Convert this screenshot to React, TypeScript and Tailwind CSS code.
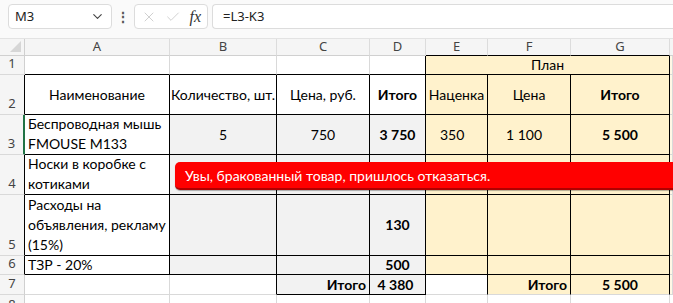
import { ChevronDown, Check, X } from "lucide-react";

const cols = ["A", "B", "C", "D", "E", "F", "G"];

type CellProps = {
  children?: React.ReactNode;
  className?: string;
};

const dark = "border-r border-b border-black";
const light = "border-r border-b border-[#d9d9d9]";

function Cell({ children, className = "" }: CellProps) {
  return (
    <div className={`flex min-w-0 overflow-hidden whitespace-nowrap leading-[20px] ${className}`}>{children}</div>
  );
}

function RowHead({ n, className = "" }: { n: number; className?: string }) {
  return (
    <div
      className={`flex items-end justify-center pb-[1px] text-[13px] text-[#444] font-['Noto_Sans',sans-serif] bg-[#f5f5f5] border-b border-[#d9d9d9] ${className}`}
    >
      {n}
    </div>
  );
}

export default function App() {
  const gray = "bg-[#f2f2f2]";
  const gold = "bg-[#fff2cc]";
  return (
    <div className="w-[673px] h-[303px] overflow-hidden bg-white relative font-['Lato',sans-serif] text-[14px] text-black">
      {/* formula bar */}
      <div className="h-[39px] flex items-start gap-[4px] pt-[4px] pl-[8px] bg-[#fafafa] border-b border-[#e3e3e3]">
        <div className="w-[104px] h-[25px] flex items-center justify-between px-[6px] bg-white border border-[#dcdcdc] rounded-[4px] font-['Noto_Sans',sans-serif] text-[13px] text-[#222]">
          <span>M3</span>
          <ChevronDown className="w-[15px] h-[15px] text-[#444]" strokeWidth={1.8} />
        </div>
        <div className="w-[14px] h-[25px] flex items-center justify-center text-[#555] text-[14px] font-bold">⋮</div>
        <div className="w-[74px] h-[25px] flex items-center justify-between px-[6px] bg-white border border-[#dcdcdc] rounded-[4px]">
          <X className="w-[16px] h-[16px] text-[#c4c4c4]" strokeWidth={1.2} />
          <Check className="w-[16px] h-[16px] text-[#c4c4c4]" strokeWidth={1.2} />
          <span className="font-['Liberation_Serif',serif] italic text-[16px] text-[#333] leading-none">fx</span>
        </div>
        <div className="flex-1 h-[25px] flex items-center px-[10px] bg-white border border-[#dcdcdc] rounded-l-[4px] border-r-0 font-['Noto_Sans',sans-serif] text-[13px] text-[#222]">
          =L3-K3
        </div>
      </div>

      {/* sheet */}
      <div className="grid grid-cols-[25px_145px_107px_93px_56px_62px_83px_99px_1fr] grid-rows-[17px_19px_40px_40px_40px_61px_19px_20px_1fr] h-[264px]">
        {/* column headers */}
        <div className="relative bg-[#f5f5f5] border-r border-b border-[#d0d0d0]">
          <div className="absolute right-[3px] bottom-[3px] w-0 h-0 border-l-[11px] border-l-transparent border-b-[11px] border-b-[#d6d6d6]" />
        </div>
        {cols.map((c, i) => (
          <div
            key={c}
            className={`flex items-center justify-center text-[13px] text-[#444] font-['Noto_Sans',sans-serif] bg-[#f5f5f5] border-r border-[#dcdcdc] border-b ${
              i >= 4 ? "border-b-black" : "border-b-[#d0d0d0]"
            }`}
          >
            {c}
          </div>
        ))}
        <div className="bg-[#f5f5f5] border-b border-[#d0d0d0]" />

        {/* row 1 */}
        <RowHead n={1} className="border-r border-r-[#d0d0d0]" />
        <Cell className="border-r border-[#d9d9d9] border-b border-b-black" />
        <Cell className="border-r border-[#d9d9d9] border-b border-b-black" />
        <Cell className="border-r border-[#d9d9d9] border-b border-b-black" />
        <Cell className={dark} />
        <Cell className={`col-span-3 ${dark} ${gold} items-center justify-center`}>План</Cell>
        <Cell className={`${light} bg-[#fff8e6]`} />

        {/* row 2 */}
        <RowHead n={2} className="border-r border-r-black" />
        <Cell className={`${dark} items-center justify-center`}>Наименование</Cell>
        <Cell className={`${dark} items-center justify-center`}>Количество, шт.</Cell>
        <Cell className={`${dark} items-center justify-center`}>Цена, руб.</Cell>
        <Cell className={`${dark} items-center justify-center font-bold`}>Итого</Cell>
        <Cell className={`${dark} ${gold} items-center justify-center`}>Наценка</Cell>
        <Cell className={`${dark} ${gold} items-center justify-center`}>Цена</Cell>
        <Cell className={`${dark} ${gold} items-center justify-center font-bold`}>Итого</Cell>
        <Cell className={`${light} bg-[#fff8e6]`} />

        {/* row 3 */}
        <RowHead n={3} className="bg-[#dedede] text-[#1e6e3e] border-r-2 border-r-[#217346]" />
        <Cell className={`${dark} items-end px-[3px]`}>
          <span>
            Беспроводная мышь
            <br />
            FMOUSE M133
          </span>
        </Cell>
        <Cell className={`${dark} ${gray} items-center justify-center`}>5</Cell>
        <Cell className={`${dark} ${gray} items-center justify-center`}>750</Cell>
        <Cell className={`${dark} ${gray} items-center justify-center font-bold`}>3 750</Cell>
        <Cell className={`${dark} ${gold} items-center pl-[14px]`}>350</Cell>
        <Cell className={`${dark} ${gold} items-center justify-center pr-[10px]`}>1 100</Cell>
        <Cell className={`${dark} ${gold} items-center justify-center font-bold`}>5 500</Cell>
        <Cell className={`${light} bg-[#fff8e6]`} />

        {/* row 4 */}
        <RowHead n={4} className="border-r border-r-black" />
        <Cell className={`${dark} items-end px-[3px]`}>
          <span>
            Носки в коробке с
            <br />
            котиками
          </span>
        </Cell>
        <Cell className={`${dark} ${gray}`} />
        <Cell className={`${dark} ${gray}`} />
        <Cell className={`${dark} ${gray}`} />
        <Cell className={`${dark} ${gold}`} />
        <Cell className={`${dark} ${gold}`} />
        <Cell className={`${dark} ${gold}`} />
        <Cell className={`${light} bg-[#fff8e6]`} />

        {/* row 5 */}
        <RowHead n={5} className="border-r border-r-black" />
        <Cell className={`${dark} items-end px-[3px]`}>
          <span>
            Расходы на
            <br />
            объявления, рекламу
            <br />
            (15%)
          </span>
        </Cell>
        <Cell className={`${dark} ${gray}`} />
        <Cell className={`${dark} ${gray}`} />
        <Cell className={`${dark} ${gray} items-center justify-center font-bold`}>130</Cell>
        <Cell className={`${dark} ${gold}`} />
        <Cell className={`${dark} ${gold}`} />
        <Cell className={`${dark} ${gold}`} />
        <Cell className={`${light} bg-[#fff8e6]`} />

        {/* row 6 */}
        <RowHead n={6} className="border-r border-r-black" />
        <Cell className={`${dark} items-center px-[3px]`}>ТЗР - 20%</Cell>
        <Cell className={`${dark} ${gray}`} />
        <Cell className={`${dark} ${gray}`} />
        <Cell className={`${dark} ${gray} items-center justify-center font-bold`}>500</Cell>
        <Cell className={`${dark} ${gold}`} />
        <Cell className={`${dark} ${gold}`} />
        <Cell className={`${dark} ${gold}`} />
        <Cell className={`${light} bg-[#fff8e6]`} />

        {/* row 7 */}
        <RowHead n={7} className="border-r border-r-[#d0d0d0]" />
        <Cell className={light} />
        <Cell className="border-r border-r-black border-b border-b-[#d9d9d9]" />
        <Cell className={`${dark} ${gray} items-center justify-end pr-[3px] font-bold`}>Итого</Cell>
        <Cell className={`${dark} ${gray} items-center justify-center font-bold pr-[4px]`}>4 380</Cell>
        <Cell className="border-r border-r-black border-b border-b-[#d9d9d9]" />
        <Cell className={`border-r border-r-black border-b border-b-[#d9d9d9] ${gold} items-center justify-end pr-[3px] font-bold`}>
          Итого
        </Cell>
        <Cell className={`border-r border-r-black border-b border-b-[#d9d9d9] ${gold} items-center justify-center font-bold`}>
          5 500
        </Cell>
        <Cell className={`${light} bg-[#fff8e6]`} />

        {/* row 8 */}
        <RowHead n={8} className="border-r border-r-[#d0d0d0]" />
        {cols.map((c) => (
          <Cell key={c} className={light} />
        ))}
        <Cell />
      </div>

      {/* error banner */}
      <div className="absolute left-[175px] top-[162px] right-[-8px] h-[28px] flex items-center pl-[10px] bg-[#ff0000] rounded-[5px] border-b-2 border-b-[#b00000] shadow-[0_1px_1px_rgba(0,0,0,0.3)] text-white text-[14px]">
        Увы, бракованный товар, пришлось отказаться.
      </div>
    </div>
  );
}
